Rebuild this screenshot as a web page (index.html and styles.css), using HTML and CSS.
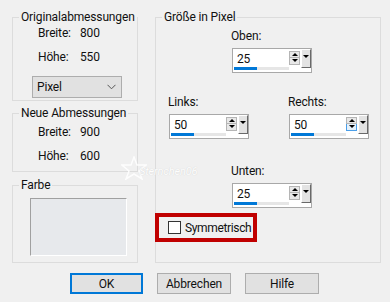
FILE: index.html
```html
<!DOCTYPE html>
<html lang="de">
<head>
    <meta charset="UTF-8">
    <meta name="viewport" content="width=device-width, initial-scale=1.0">
    <title>Leinwandgröße</title>
    <link rel="stylesheet" href="styles.css">
</head>
<body>
    <div class="dialog">
        <div class="main">
            <div class="left">
                <!-- Original dimensions -->
                <fieldset class="group group-orig">
                    <legend>Originalabmessungen</legend>
                    <div class="dims">
                        <span>Breite:</span><span>800</span>
                        <span>Höhe:</span><span>550</span>
                    </div>
                    <div class="select">
                        <span>Pixel</span>
                        <svg width="9" height="6" viewBox="0 0 9 6"><path d="M0.5 0.8 L4.5 4.8 L8.5 0.8" fill="none" stroke="#555" stroke-width="1"/></svg>
                    </div>
                </fieldset>

                <!-- New dimensions -->
                <fieldset class="group group-new">
                    <legend>Neue Abmessungen</legend>
                    <div class="dims">
                        <span>Breite:</span><span>900</span>
                        <span>Höhe:</span><span>600</span>
                    </div>
                </fieldset>

                <!-- Colour -->
                <fieldset class="group group-color">
                    <legend>Farbe</legend>
                    <div class="swatch"></div>
                </fieldset>
            </div>

            <!-- Size in pixels -->
            <fieldset class="group group-size">
                <legend>Größe in Pixel</legend>
                <div class="field field-top">
                    <label>Oben:</label>
                    <div class="spin">
                        <div class="spin-main"><span class="spin-value">25</span><div class="spin-bar"><div class="spin-fill"></div></div></div>
                        <div class="spin-arrows"><span class="arrow up"></span><span class="arrow down"></span></div>
                        <span class="spin-drop"></span>
                    </div>
                </div>
                <div class="pair">
                    <div class="field">
                        <label>Links:</label>
                        <div class="spin">
                            <div class="spin-main"><span class="spin-value">50</span><div class="spin-bar"><div class="spin-fill"></div></div></div>
                            <div class="spin-arrows"><span class="arrow up"></span><span class="arrow down"></span></div>
                            <span class="spin-drop"></span>
                        </div>
                    </div>
                    <div class="field">
                        <label>Rechts:</label>
                        <div class="spin">
                            <div class="spin-main"><span class="spin-value">50</span><div class="spin-bar"><div class="spin-fill"></div></div></div>
                            <div class="spin-arrows"><span class="arrow up"></span><span class="arrow down active"></span></div>
                            <span class="spin-drop"></span>
                        </div>
                    </div>
                </div>
                <div class="field field-bottom">
                    <label>Unten:</label>
                    <div class="spin">
                        <div class="spin-main"><span class="spin-value">25</span><div class="spin-bar"><div class="spin-fill"></div></div></div>
                        <div class="spin-arrows"><span class="arrow up"></span><span class="arrow down"></span></div>
                        <span class="spin-drop"></span>
                    </div>
                </div>
                <div class="highlight">
                    <span class="check"></span>
                    <span>Symmetrisch</span>
                </div>
            </fieldset>
        </div>

        <div class="actions">
            <button class="btn btn-primary">OK</button>
            <button class="btn">Abbrechen</button>
            <button class="btn">Hilfe</button>
        </div>

        <!-- Watermark -->
        <div class="watermark">
            <svg width="26" height="24" viewBox="0 0 26 24"><polygon points="13,1 16,9 25,9 18,15 21,23 13,18 5,23 8,15 1,9 10,9" fill="none" stroke="#fff" stroke-width="1.5"/></svg>
            <span>Sternchen06</span>
        </div>
    </div>
</body>
</html>
```

FILE: styles.css
```css
/* General */
body {
    margin: 0;
    background-color: #f0f0f0;
    font-family: Roboto, "Liberation Sans", sans-serif;
    font-size: 12px;
    line-height: 16px;
    letter-spacing: -0.15px;
    color: #111;
}

.dialog {
    position: relative;
    width: 390px;
    height: 302px;
    overflow: hidden;
    white-space: nowrap;
}

.main {
    display: flex;
    gap: 17px;
    padding: 9px 0 0 12px;
}

.left {
    width: 126px;
}

/* Group boxes */
.group {
    margin: 0;
    padding: 0;
    min-width: 0;
    border: 1px solid #dcdcdc;
}

.group legend {
    margin-left: 6px;
    padding: 0 2px;
    line-height: 16px;
}

.dims {
    display: grid;
    grid-template-columns: 42px auto;
    row-gap: 8px;
    padding-left: 25px;
    line-height: 16px;
}

.group-orig {
    padding-bottom: 2px;
}

.select {
    display: flex;
    align-items: center;
    justify-content: space-between;
    box-sizing: border-box;
    width: 90px;
    height: 22px;
    margin: 11px 0 0 19px;
    padding: 0 5px 0 4px;
    border: 1px solid #adadad;
    background-color: #e1e1e1;
}

.group-new {
    margin-top: 4px;
    padding-bottom: 7px;
}

.group-new .dims {
    padding-top: 3px;
}

.group-color {
    margin-top: 5px;
}

.swatch {
    box-sizing: border-box;
    width: 97px;
    height: 58px;
    margin: 5px 0 6px 17px;
    border: 1px solid #fff;
    border-top-color: #a0a0a0;
    border-left-color: #a0a0a0;
    background-color: #e7e9ec;
}

/* Size group */
.group-size {
    width: 226px;
    box-sizing: border-box;
}

.field label {
    display: block;
    line-height: 16px;
}

.field-top {
    padding-left: 75px;
    margin-top: 3px;
}

.pair {
    display: grid;
    grid-template-columns: 120px 120px;
    padding-left: 12px;
    margin-top: 21px;
}

.field-bottom {
    padding-left: 75px;
    margin-top: 24px;
}

.spin {
    display: flex;
    align-items: flex-start;
    box-sizing: border-box;
    width: 80px;
    height: 25px;
    margin: 4px 0 0 1px;
    border: 1px solid #a8a8a8;
    background-color: #fff;
}

.spin-main {
    flex: 1;
}

.spin-value {
    display: block;
    padding: 2px 0 0 4px;
    line-height: 16px;
}

.spin-bar {
    height: 3px;
    margin-left: 1px;
    background-color: #e6e6e6;
}

.spin-fill {
    width: 23px;
    height: 3px;
    background-color: #0078d7;
}

.spin-arrows {
    display: flex;
    flex-direction: column;
    width: 11px;
    margin-top: 2px;
}

.arrow {
    position: relative;
    box-sizing: border-box;
    height: 7px;
    border: 1px solid #b5b5b5;
    background-color: #e8e8e8;
}

.arrow + .arrow {
    border-top: none;
}

.arrow::after {
    content: "";
    position: absolute;
    left: 2px;
    top: 1px;
    border-left: 3px solid transparent;
    border-right: 3px solid transparent;
}

.arrow.up::after {
    border-bottom: 3px solid #000;
}

.arrow.down::after {
    top: 1px;
    border-top: 3px solid #000;
}

.arrow.active {
    border-color: #4a9ee8;
    background-color: #e5f1fb;
}

.spin-drop {
    position: relative;
    box-sizing: border-box;
    width: 10px;
    height: 19px;
    margin-left: 1px;
    border: 1px solid #fff;
    border-right-color: #696969;
    border-bottom-color: #696969;
    background-color: #e3e3e3;
}

.spin-drop::after {
    content: "";
    position: absolute;
    left: 1px;
    top: 5px;
    border-left: 3px solid transparent;
    border-right: 3px solid transparent;
    border-top: 3px solid #000;
}

/* Highlighted checkbox */
.highlight {
    display: flex;
    align-items: center;
    gap: 4px;
    box-sizing: border-box;
    width: 102px;
    height: 29px;
    margin: 5px 0 0 -1px;
    padding-left: 9px;
    border: 4px solid #c00000;
    letter-spacing: -0.35px;
}

.check {
    flex-shrink: 0;
    box-sizing: border-box;
    width: 13px;
    height: 13px;
    border: 1px solid #333;
    background-color: #fff;
}

/* Buttons */
.actions {
    display: flex;
    gap: 14px;
    padding: 10px 0 0 70px;
}

.btn {
    box-sizing: border-box;
    width: 74px;
    height: 21px;
    padding: 0;
    border: 1px solid #adadad;
    background-color: #e1e1e1;
    font-family: inherit;
    font-size: 12px;
    letter-spacing: inherit;
    color: #111;
}

.btn-primary {
    width: 73px;
    border: 2px solid #0078d7;
}

/* Watermark */
.watermark {
    position: absolute;
    left: 121px;
    top: 156px;
    display: flex;
    align-items: flex-end;
    opacity: 0.9;
}

.watermark span {
    margin-left: -8px;
    font-style: italic;
    font-size: 11px;
    color: #fff;
    text-shadow: 0 0 1px #c8c8c8;
}
```
